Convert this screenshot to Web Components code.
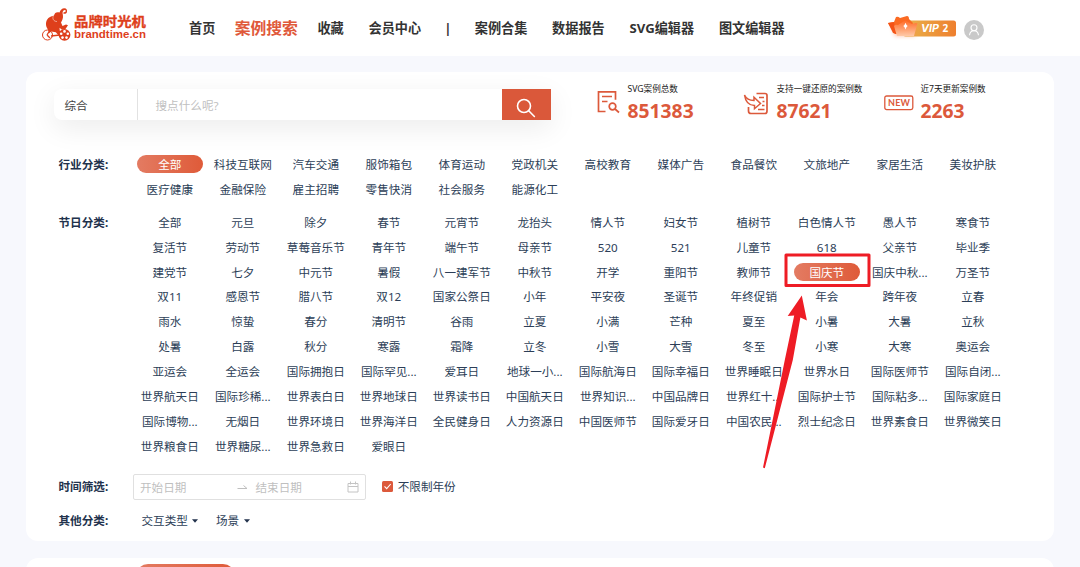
<!DOCTYPE html>
<html lang="zh-CN">
<head>
<meta charset="utf-8">
<title>品牌时光机</title>
<style>
  body {
    margin: 0;
    width: 1080px;
    height: 567px;
    overflow: hidden;
    background: #f7f8fd;
    color: #2c3e57;
    font-family: "Noto Sans", "Noto Sans CJK SC", sans-serif;
    font-size: 11.6px;
  }
</style>
</head>
<body>
<brand-page></brand-page>

<script>
// small helper: every element clones its template into an open root
function makeRoot(el, html) {
  const template = document.createElement('template');
  template.innerHTML = html;
  const root = el.attachShadow({ mode: 'open' });
  root.appendChild(template.content.cloneNode(true));
  return root;
}

// brand-logo
class BrandLogo extends HTMLElement {
  constructor() {
    super();
    makeRoot(this, `
      <style>
        :host { display: block; width: 106px; height: 38px; }
        svg { display: block; overflow: visible; }
      </style>
      <svg width="106" height="38" viewBox="41 6 106 38">
        <g fill="#de3f1b">
          <path d="M46.500 27C45 22 47 18 51 16.500c1-.5 2-.8 3-1C54.500 12.500 57 11.500 59.500 12.500c.8-2.500 2.500-4.300 4.800-4.300 2.300 0 3.300 2 2.600 4-.6 1.600-2.400 2-3.600 1.300l.5-1.500c1.200.4 1.900-.2 1.900-1 0-1.200-1.400-1.300-2.200-.5-1.200 1.200-1 2.600-.6 4.500.6 3-.9 5.500-1.900 7.500l1.500 3.500 3.500-1.500 2 .8-2.500 3.700-3.500.8-2.500-2 .3 3 1.500 3.500-2.500 1.500-3-3.500-4.500-.8-2.300 1.800-.5-2.500z"/>
          <circle cx="64.500" cy="34.800" r="5.900"/>
        </g>
        <g fill="none" stroke="#de3f1b">
          <circle cx="47.500" cy="35" r="5" stroke-width="1"/>
          <path d="M47 35l3-5M47 35l3 3M51 36l9-1" stroke-width="1.300"/>
          <path d="M53.500 15.500c-1.500 3 0 6 3.500 6" stroke="#fff" stroke-width=".5"/>
        </g>
        <g fill="#fff">
          <circle cx="64.500" cy="31.400" r="1.300"/>
          <circle cx="67.800" cy="33.700" r="1.300"/>
          <circle cx="66.500" cy="37.600" r="1.300"/>
          <circle cx="62.500" cy="37.600" r="1.300"/>
          <circle cx="61.200" cy="33.700" r="1.300"/>
        </g>
        <text x="74" y="26.200" fill="#de3f1b" stroke="#de3f1b" stroke-width=".3" font-size="13" font-weight="bold" textLength="72" lengthAdjust="spacingAndGlyphs" font-family="Noto Sans CJK SC, sans-serif">品牌时光机</text>
        <text x="74" y="37.500" fill="#de3f1b" font-size="10.500" font-weight="bold" textLength="72" lengthAdjust="spacingAndGlyphs" font-family="Liberation Sans, sans-serif">brandtime.cn</text>
      </svg>
    `);
  }
}
customElements.define('brand-logo', BrandLogo);

// nav-item
class NavItem extends HTMLElement {
  constructor() {
    super();
    makeRoot(this, `
      <style>
        :host {
          display: block;
          color: #333;
          font-size: 13.150px;
          font-weight: bold;
          line-height: 20px;
          white-space: nowrap;
        }
        :host([active]) { color: #e0593a; transform: translateY(1.500px) scale(1.2); }
      </style>
      <slot></slot>
    `);
  }
}
customElements.define('nav-item', NavItem);

// vip-badge
class VipBadge extends HTMLElement {
  constructor() {
    super();
    makeRoot(this, `
      <style>
        :host { display: block; width: 72px; height: 28px; }
        svg { display: block; overflow: visible; }
      </style>
      <svg width="72" height="28" viewBox="886 13 72 28">
        <defs>
          <linearGradient id="bar"><stop stop-color="#e9b44c"/><stop offset="1" stop-color="#ee7f2e"/></linearGradient>
          <linearGradient id="front" x2="0" y2="1"><stop stop-color="#ff6c27"/><stop offset="1" stop-color="#ffc9a8"/></linearGradient>
          <filter id="glow" x="-50%" y="-50%" width="200%" height="200%"><feGaussianBlur stdDeviation="2"/></filter>
        </defs>
        <rect x="903" y="20.500" width="53" height="16" rx="2.500" fill="url(#bar)"/>
        <path d="M892 25h23v11h-20z" fill="#ff824d" opacity=".5" filter="url(#glow)"/>
        <path d="M888 23l6-1 2-5q2-1 4 1l7-2q2 0 2 3l4 4-5 10-13 1z" fill="#fb6a22"/>
        <path d="M888 23l6-1 2 12-3-1z" fill="#f45316"/>
        <path d="M894 26q1-2 4-1l6-4q2-1 4 1l4 2 4-1q2 0 1 2l-3 11h-17z" fill="url(#front)"/>
        <path d="M905.500 22.800q.8 2.500 2.200 3.200-1.400.9-2.200 3.500-.8-2.600-2.200-3.500 1.400-.7 2.200-3.200z" fill="#fff"/>
        <text x="921" y="32" fill="#fff" font-size="9.700" font-weight="bold" font-style="italic" textLength="18" lengthAdjust="spacingAndGlyphs" font-family="Inter, sans-serif">VIP</text>
        <text x="942.500" y="32" fill="#fff" font-size="10" font-weight="bold" font-family="Open Sans, sans-serif">2</text>
      </svg>
    `);
  }
}
customElements.define('vip-badge', VipBadge);

// site-header
class SiteHeader extends HTMLElement {
  constructor() {
    super();
    makeRoot(this, `
      <style>
        :host {
          display: flex;
          box-sizing: border-box;
          height: 56px;
          padding-left: 41px;
          background: #fff;
        }
        brand-logo { margin-top: 6px; }
        nav { display: flex; gap: 24.800px; margin: 18px 0 0 42px; width: 597px; flex: none; }
        .sep { width: 4px; display: flex; justify-content: center; }
        vip-badge { margin: 13px 0 0 100px; }
        .avatar { margin: 20px 0 0 5.700px; }
      </style>
      <brand-logo></brand-logo>
      <nav>
        <nav-item>首页</nav-item>
        <nav-item active>案例搜索</nav-item>
        <nav-item>收藏</nav-item>
        <nav-item>会员中心</nav-item>
        <nav-item class="sep">|</nav-item>
        <nav-item>案例合集</nav-item>
        <nav-item>数据报告</nav-item>
        <nav-item>SVG编辑器</nav-item>
        <nav-item>图文编辑器</nav-item>
      </nav>
      <vip-badge></vip-badge>
      <svg class="avatar" width="20" height="20" viewBox="0 0 20 20">
        <circle cx="10" cy="10" r="10" fill="#c9c9c9"/>
        <g fill="none" stroke="#fff" stroke-width="1.100">
          <circle cx="10" cy="7.800" r="3"/>
          <path d="M5.500 15.200c.3-2.500 2-4.400 4.500-4.400s4.200 1.900 4.500 4.400"/>
        </g>
      </svg>
    `);
  }
}
customElements.define('site-header', SiteHeader);

// search-box
class SearchBox extends HTMLElement {
  constructor() {
    super();
    makeRoot(this, `
      <style>
        :host {
          display: flex;
          align-items: stretch;
          width: 497px;
          height: 31px;
          border-radius: 8px 0 0 8px;
          background: #fff;
          box-shadow: 0 8px 28px rgba(0,0,0,.08);
          line-height: 33px;
        }
        .type { width: 84px; padding-left: 10.500px; box-sizing: border-box; color: #444; border-right: 1px solid #e2e2e2; }
        .input { flex: 1; padding-left: 17.500px; color: #bfbfbf; }
        .btn { width: 49.500px; background: #da583a; }
        svg { display: block; }
      </style>
      <div class="type">综合</div>
      <div class="input">搜点什么呢?</div>
      <div class="btn">
        <svg width="49" height="31" viewBox="0 0 49 31" fill="none" stroke="#fff" stroke-width="1.600" stroke-linecap="round">
          <circle cx="22" cy="17" r="6.500"/>
          <path d="M26.700 21.700l5.700 5.800"/>
        </svg>
      </div>
    `);
  }
}
customElements.define('search-box', SearchBox);

// stat-item: icon slot, a caption and a number
class StatItem extends HTMLElement {
  constructor() {
    super();
    const root = makeRoot(this, `
      <style>
        :host { display: flex; color: #333; }
        .label { font-size: 8.600px; line-height: 12px; white-space: nowrap; color: #222; }
        .num { font-size: 19.300px; line-height: 26px; margin-top: 2.500px; font-weight: bold; color: #dc593b; }
      </style>
      <slot></slot>
      <div>
        <div class="label"></div>
        <div class="num"></div>
      </div>
    `);
    root.querySelector('.label').textContent = this.getAttribute('label');
    root.querySelector('.num').textContent = this.getAttribute('num');
  }
}
customElements.define('stat-item', StatItem);

// filter-row: bold label on the left, anything on the right
class FilterRow extends HTMLElement {
  constructor() {
    super();
    makeRoot(this, `
      <style>
        :host { display: flex; }
        b { width: 74.500px; flex: none; color: #22324c; line-height: 25px; white-space: nowrap; }
      </style>
      <b><slot name="label"></slot></b>
      <slot></slot>
    `);
  }
}
customElements.define('filter-row', FilterRow);

// tag-grid: twelve columns of tags, "active" is the index of the chosen one
class TagGrid extends HTMLElement {
  constructor() {
    super();
    const root = makeRoot(this, `
      <style>
        :host {
          display: grid;
          grid-template-columns: repeat(12, 73px);
          grid-auto-rows: 24.930px;
          align-items: center;
          justify-items: center;
        }
        span { box-sizing: border-box; width: 66px; height: 18.600px; line-height: 20px; text-align: center; white-space: nowrap; }
        span.on { border-radius: 9.300px; background: linear-gradient(90deg, #e37b62, #df5b39); color: #fff; }
      </style>
    `);
    const active = Number(this.getAttribute('active'));
    this.getAttribute('items').split(' ').forEach((name, i) => {
      const tag = document.createElement('span');
      tag.textContent = name;
      if (i === active) tag.className = 'on';
      root.appendChild(tag);
    });
  }
}
customElements.define('tag-grid', TagGrid);

// date-range
class DateRange extends HTMLElement {
  constructor() {
    super();
    makeRoot(this, `
      <style>
        :host {
          display: flex;
          align-items: center;
          box-sizing: border-box;
          width: 233px;
          height: 26px;
          padding: 0 6px;
          border: 1px solid #e0e0e0;
          border-radius: 2px;
          color: #bfbfbf;
        }
        .start { width: 97px; }
        .arrow { margin-right: 7.500px; }
        .end { flex: 1; }
      </style>
      <span class="start">开始日期</span>
      <svg class="arrow" width="11" height="8" viewBox="0 0 11 8" fill="none" stroke="#bfbfbf"><path d="M.5 5.500h9.500L6.500 2.500"/></svg>
      <span class="end">结束日期</span>
      <svg width="12" height="12" viewBox="0 0 12 12" fill="none" stroke="#c4c4c4"><path d="M1 2.500h10v8.500H1zM1 5.500h10M3.500 .5v3M8.500 .5v3"/></svg>
    `);
  }
}
customElements.define('date-range', DateRange);

// check-box
class CheckBox extends HTMLElement {
  constructor() {
    super();
    makeRoot(this, `
      <style>
        :host { display: flex; align-items: center; gap: 5px; height: 22px; }
      </style>
      <svg width="11" height="11" viewBox="0 0 11 11"><rect width="11" height="11" rx="1.500" fill="#dc593b"/><path d="M2.500 5.300l2.200 2.300 4-4.600" fill="none" stroke="#fff" stroke-width="1.100"/></svg>
      <slot></slot>
    `);
  }
}
customElements.define('check-box', CheckBox);

// drop-link
class DropLink extends HTMLElement {
  constructor() {
    super();
    makeRoot(this, `
      <style>
        :host { display: flex; align-items: center; height: 25px; gap: 4.500px; }
        svg { margin-top: 2px; }
      </style>
      <slot></slot>
      <svg width="6" height="4" viewBox="0 0 6 4"><path d="M0 .3h6L3 3.700z" fill="#22324c"/></svg>
    `);
  }
}
customElements.define('drop-link', DropLink);

// mark-arrow: red frame and arrow lying over the chosen tag
class MarkArrow extends HTMLElement {
  constructor() {
    super();
    makeRoot(this, `
      <style>
        :host { display: block; position: absolute; left: 760px; top: 250px; }
        svg { display: block; }
      </style>
      <svg width="115" height="220" viewBox="760 250 115 220">
        <rect x="786" y="255" width="83" height="30.500" fill="none" stroke="#ee1c25" stroke-width="3" stroke-linejoin="round"/>
        <path d="M801.800 295.500L787.700 316l6.500-.6L785 359l-22 108.500 1.800.7L792.800 360l7.600-42.500 6.500 3z" fill="#ee1c25"/>
      </svg>
    `);
  }
}
customElements.define('mark-arrow', MarkArrow);

// brand-page
class BrandPage extends HTMLElement {
  constructor() {
    super();
    makeRoot(this, `
      <style>
        :host { display: block; position: relative; height: 567px; overflow: hidden; }
        .card {
          box-sizing: border-box;
          height: 469px;
          margin: 16px 26px 0;
          padding: 17px 0 0 28px;
          border-radius: 12px;
          background: #fff;
          overflow: hidden;
        }
        .top { display: flex; height: 62.500px; }
        .stats { display: flex; margin-top: -6px; }
        .stats svg { flex: none; }
        .s1 { margin-left: 45px; width: 147px; }
        .s2 { width: 140px; }
        .s1 svg { margin: 7px 7.500px 0 0; }
        .s2 svg { margin: 8px 8px 0 -.5px; }
        .s3 svg { margin: 11.500px 6.500px 0 0; }
        filter-row { margin-left: 4.500px; }
        tag-grid { margin-left: .3px; }
        .festival { margin-top: 8.200px; }
        .time { margin-top: 15.700px; height: 26px; }
        check-box { margin: .8px 0 0 15.700px; }
        .other { margin-top: 7.500px; }
        drop-link:first-of-type { margin: 0 17.500px 0 8.500px; }
        .next {
          display: flex;
          height: 30px;
          margin: 17px 26px 0;
          padding: 6px 0 0 110px;
          border-radius: 12px;
          background: #fff;
        }
        .tab { width: 99px; height: 24px; border-radius: 12px; background: linear-gradient(90deg, #e37b62, #df5b39); }
      </style>
      <site-header></site-header>
      <section class="card">
        <div class="top">
          <search-box></search-box>
          <div class="stats">
            <stat-item class="s1" label="SVG案例总数" num="851383">
              <svg width="24" height="24" viewBox="0 0 24 24" fill="none" stroke="#dc593b" stroke-width="1.700">
                <path d="M9.500 21.500H2.500V1.800h17v8M6 6.500h10M6 11.500h5.500"/>
                <circle cx="16.500" cy="16.500" r="3.300"/><path d="M19 19l4 3.500"/>
              </svg>
            </stat-item>
            <stat-item class="s2" label="支持一键还原的案例数" num="87621">
              <svg width="26" height="24" viewBox="0 0 26 24" fill="none" stroke="#dc593b" stroke-width="1.700">
                <path d="M13.500 2.500H22q2 0 2 2V20q0 2.500-2 2.500H8q-2.500 0-2.500-2.500V16"/>
                <path d="M1.500 4Q4 9.500 11 9.500V6.200l6.500 6.300-6 5.200v-3.200Q3 14.500 1.500 4z" stroke-width="1.500"/>
                <path d="M16 6.500h5M19.500 10.500h2M19 14.500h2.500M15 18.500h6.500" stroke-width="1.500"/>
              </svg>
            </stat-item>
            <stat-item class="s3" label="近7天更新案例数" num="2263">
              <svg width="31" height="16" viewBox="0 0 31 16">
                <rect x="1.800" y="1" width="28" height="13.600" rx="1.800" fill="none" stroke="#dc593b" stroke-width="1.300"/>
                <text x="5" y="11.300" font-size="9" font-weight="bold" fill="#dc593b" textLength="22" font-family="Lato, sans-serif">NEW</text>
              </svg>
            </stat-item>
          </div>
        </div>
        <filter-row>
          <span slot="label">行业分类:</span>
          <tag-grid active="0" items="全部 科技互联网 汽车交通 服饰箱包 体育运动 党政机关 高校教育 媒体广告 食品餐饮 文旅地产 家居生活 美妆护肤 医疗健康 金融保险 雇主招聘 零售快消 社会服务 能源化工"></tag-grid>
        </filter-row>
        <filter-row class="festival">
          <span slot="label">节日分类:</span>
          <tag-grid active="33" items="全部 元旦 除夕 春节 元宵节 龙抬头 情人节 妇女节 植树节 白色情人节 愚人节 寒食节 复活节 劳动节 草莓音乐节 青年节 端午节 母亲节 520 521 儿童节 618 父亲节 毕业季 建党节 七夕 中元节 暑假 八一建军节 中秋节 开学 重阳节 教师节 国庆节 国庆中秋... 万圣节 双11 感恩节 腊八节 双12 国家公祭日 小年 平安夜 圣诞节 年终促销 年会 跨年夜 立春 雨水 惊蛰 春分 清明节 谷雨 立夏 小满 芒种 夏至 小暑 大暑 立秋 处暑 白露 秋分 寒露 霜降 立冬 小雪 大雪 冬至 小寒 大寒 奥运会 亚运会 全运会 国际拥抱日 国际罕见... 爱耳日 地球一小... 国际航海日 国际幸福日 世界睡眠日 世界水日 国际医师节 国际自闭... 世界航天日 国际珍稀... 世界表白日 世界地球日 世界读书日 中国航天日 世界知识... 中国品牌日 世界红十... 国际护士节 国际粘多... 国际家庭日 国际博物... 无烟日 世界环境日 世界海洋日 全民健身日 人力资源日 中国医师节 国际爱牙日 中国农民... 烈士纪念日 世界素食日 世界微笑日 世界粮食日 世界糖尿... 世界急救日 爱眼日"></tag-grid>
        </filter-row>
        <filter-row class="time">
          <span slot="label">时间筛选:</span>
          <date-range></date-range>
          <check-box>不限制年份</check-box>
        </filter-row>
        <filter-row class="other">
          <span slot="label">其他分类:</span>
          <drop-link>交互类型</drop-link>
          <drop-link>场景</drop-link>
        </filter-row>
      </section>
      <section class="next"><div class="tab"></div></section>
      <mark-arrow></mark-arrow>
    `);
  }
}
customElements.define('brand-page', BrandPage);
</script>
</body>
</html>
